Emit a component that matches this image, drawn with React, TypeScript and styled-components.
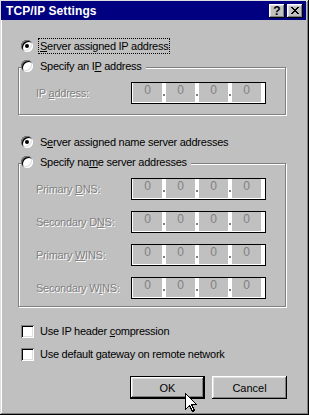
import styled, { createGlobalStyle } from "styled-components";

const GlobalStyle = createGlobalStyle`
  html, body {
    margin: 0;
    padding: 0;
    background: #c0c0c0;
  }
  * {
    box-sizing: border-box;
  }
`;

const Window = styled.div`
  position: relative;
  width: 309px;
  height: 415px;
  padding: 1px 3px 3px 1px;
  background: #c0c0c0;
  box-shadow: inset -1px -1px 0 #000, inset 1px 1px 0 #dfdfdf,
    inset -2px -2px 0 #808080, inset 2px 2px 0 #fff;
  font-family: "Liberation Sans", Arial, sans-serif;
  font-size: 11px;
  color: #000;
  overflow: hidden;
`;

const TitleBar = styled.div`
  height: 19px;
  display: flex;
  align-items: center;
  padding: 0 3px 0 5px;
  background: #000080;
  color: #fff;
`;

const TitleText = styled.div`
  flex: 1;
  font-weight: 700;
  font-size: 12px;
  letter-spacing: 0.1px;
`;

const TitleButton = styled.div`
  width: 16px;
  height: 14px;
  margin-left: 2px;
  display: flex;
  align-items: center;
  justify-content: center;
  background: #c0c0c0;
  color: #000;
  font-weight: 700;
  font-size: 12px;
  line-height: 14px;
  box-shadow: inset -1px -1px 0 #000, inset 1px 1px 0 #fff,
    inset -2px -2px 0 #808080, inset 2px 2px 0 #dfdfdf;
`;

const Body = styled.div`
  display: flex;
  flex-direction: column;
  align-items: flex-start;
  padding: 18px 19px 0 17px;
  letter-spacing: -0.25px;
`;

const OptionRow = styled.div<{ $top?: number }>`
  display: flex;
  align-items: center;
  height: 16px;
  margin-top: ${(p) => p.$top ?? 0}px;
  margin-left: 3px;
`;

const Radio = styled.span<{ $checked?: boolean }>`
  position: relative;
  flex: none;
  width: 12px;
  height: 12px;
  border-radius: 50%;
  background: #fff;
  box-shadow: inset 1px 1px 0 #808080, inset -1px -1px 0 #fff,
    inset 2px 2px 0 #000, inset -2px -2px 0 #dfdfdf;

  &::after {
    content: "";
    display: ${(p) => (p.$checked ? "block" : "none")};
    position: absolute;
    left: 4px;
    top: 4px;
    width: 4px;
    height: 4px;
    border-radius: 50%;
    background: #000;
  }
`;

const OptionLabel = styled.span<{ $focused?: boolean }>`
  margin-left: 5px;
  padding: 0 1px;
  line-height: 14px;
  border: 1px ${(p) => (p.$focused ? "dotted #000" : "solid transparent")};
  white-space: nowrap;
`;

const Group = styled.div<{ $top: number; $bottom: number }>`
  display: flex;
  flex-direction: column;
  width: 268px;
  margin-top: ${(p) => p.$top}px;
  padding: 0 0 ${(p) => p.$bottom}px 17px;
  border: 1px solid #808080;
  box-shadow: inset 1px 1px 0 #fff, 1px 1px 0 #fff;
`;

const Legend = styled.div`
  align-self: flex-start;
  display: flex;
  align-items: center;
  height: 16px;
  margin: -10px 0 0 -15px;
  padding-right: 2px;
  background: #c0c0c0;
`;

const FieldRow = styled.div<{ $top: number }>`
  display: flex;
  align-items: center;
  margin-top: ${(p) => p.$top}px;
`;

const FieldLabel = styled.span`
  width: 95px;
  color: #808080;
  text-shadow: 1px 1px 0 #fff;
  white-space: nowrap;
`;

const IpField = styled.div`
  display: flex;
  width: 135px;
  height: 22px;
  padding: 0 4px 1px 1px;
  border: 1px solid #000;
  background: #fff;
`;

const Octet = styled.span`
  width: 29px;
  height: 19px;
  background: #c0c0c0;
  color: #808080;
  font-size: 12px;
  line-height: 14px;
  text-align: center;
  letter-spacing: 0;
`;

const Dot = styled.span`
  width: 4px;
  display: flex;
  justify-content: center;
  padding-top: 11px;

  &::before {
    content: "";
    width: 2px;
    height: 2px;
    background: #808080;
  }
`;

const CheckRow = styled.div<{ $top: number }>`
  display: flex;
  align-items: center;
  height: 13px;
  margin-top: ${(p) => p.$top}px;
  margin-left: 3px;
`;

const Checkbox = styled.span`
  flex: none;
  width: 13px;
  height: 13px;
  background: #fff;
  box-shadow: inset 1px 1px 0 #808080, inset -1px -1px 0 #fff,
    inset 2px 2px 0 #000, inset -2px -2px 0 #dfdfdf;
`;

const CheckLabel = styled.span`
  margin-left: 6px;
  line-height: 13px;
  white-space: nowrap;
`;

const ButtonRow = styled.div`
  align-self: stretch;
  display: flex;
  justify-content: flex-end;
  gap: 7px;
  margin-top: 15px;
`;

const Button = styled.div<{ $default?: boolean }>`
  width: 75px;
  height: 23px;
  display: flex;
  align-items: center;
  justify-content: center;
  letter-spacing: 0;
  box-shadow: ${(p) =>
    p.$default
      ? "inset 0 0 0 1px #000, inset -2px -2px 0 #000, inset 2px 2px 0 #fff, inset -3px -3px 0 #808080, inset 3px 3px 0 #dfdfdf"
      : "inset -1px -1px 0 #000, inset 1px 1px 0 #fff, inset -2px -2px 0 #808080, inset 2px 2px 0 #dfdfdf"};
`;

const Cursor = styled.svg`
  position: absolute;
  left: 185px;
  top: 393px;
`;

function IpAddress() {
  return (
    <IpField>
      <Octet>0</Octet>
      <Dot />
      <Octet>0</Octet>
      <Dot />
      <Octet>0</Octet>
      <Dot />
      <Octet>0</Octet>
    </IpField>
  );
}

const nameServers: { label: React.ReactNode }[] = [
  { label: <>Primary <u>D</u>NS:</> },
  { label: <>Secondary D<u>N</u>S:</> },
  { label: <>Primary <u>W</u>INS:</> },
  { label: <>Secondary W<u>I</u>NS:</> },
];

export default function App() {
  return (
    <>
      <GlobalStyle />
      <Window>
        <TitleBar>
          <TitleText>TCP/IP Settings</TitleText>
          <TitleButton>?</TitleButton>
          <TitleButton>
            <svg width="8" height="7" viewBox="0 0 8 7">
              <path
                fill="#000"
                d="M0 0h2v1H0zM6 0h2v1H6zM1 1h2v1H1zM5 1h2v1H5zM2 2h4v1H2zM3 3h2v1H3zM2 4h4v1H2zM1 5h2v1H1zM5 5h2v1H5zM0 6h2v1H0zM6 6h2v1H6z"
              />
            </svg>
          </TitleButton>
        </TitleBar>

        <Body>
          <OptionRow>
            <Radio $checked />
            <OptionLabel $focused>
              <u>S</u>erver assigned IP address
            </OptionLabel>
          </OptionRow>

          <Group $top={13} $bottom={10}>
            <Legend>
              <Radio />
              <OptionLabel>
                Specify an I<u>P</u> address
              </OptionLabel>
            </Legend>
            <FieldRow $top={8}>
              <FieldLabel>
                IP <u>a</u>ddress:
              </FieldLabel>
              <IpAddress />
            </FieldRow>
          </Group>

          <OptionRow $top={19}>
            <Radio $checked />
            <OptionLabel>
              S<u>e</u>rver assigned name server addresses
            </OptionLabel>
          </OptionRow>

          <Group $top={13} $bottom={7}>
            <Legend>
              <Radio />
              <OptionLabel>
                Specify na<u>m</u>e server addresses
              </OptionLabel>
            </Legend>
            {nameServers.map((ns, i) => (
              <FieldRow key={i} $top={i === 0 ? 8 : 11}>
                <FieldLabel>{ns.label}</FieldLabel>
                <IpAddress />
              </FieldRow>
            ))}
          </Group>

          <CheckRow $top={18}>
            <Checkbox />
            <CheckLabel>
              Use IP header <u>c</u>ompression
            </CheckLabel>
          </CheckRow>
          <CheckRow $top={10}>
            <Checkbox />
            <CheckLabel>
              Use default <u>g</u>ateway on remote network
            </CheckLabel>
          </CheckRow>

          <ButtonRow>
            <Button $default>OK</Button>
            <Button>Cancel</Button>
          </ButtonRow>
        </Body>

        <Cursor width="12" height="20" viewBox="0 0 12 20" shapeRendering="crispEdges">
          <path
            d="M0.5 0.5V16.5L4.5 12.5L7.5 18.5L9.5 17.5L6.5 11.5H11.5Z"
            fill="#fff"
            stroke="#000"
            strokeWidth="1"
          />
        </Cursor>
      </Window>
    </>
  );
}
